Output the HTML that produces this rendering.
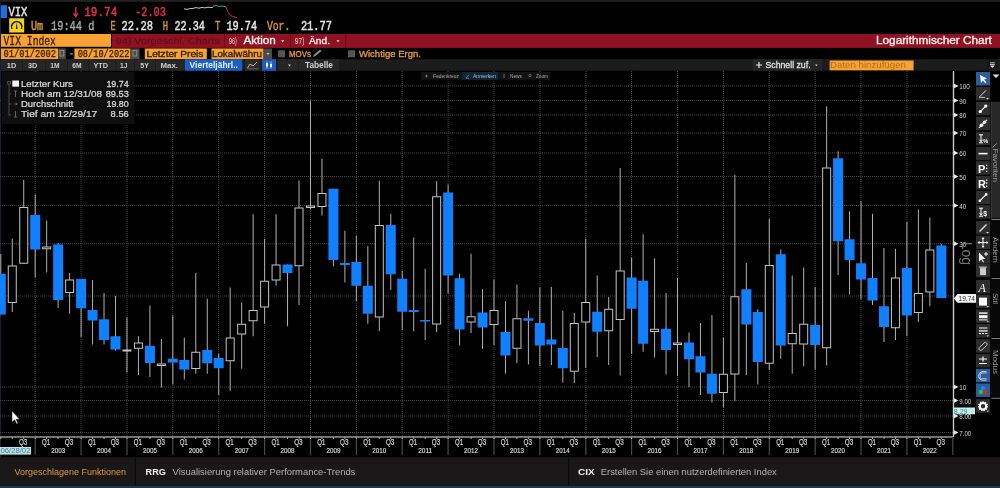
<!DOCTYPE html>
<html><head><meta charset="utf-8"><style>
*{margin:0;padding:0;box-sizing:border-box}
html,body{width:1000px;height:488px;overflow:hidden;background:#000}
body{position:relative;font-family:"Liberation Sans",sans-serif}
.a{position:absolute}
svg{position:absolute;left:0;top:0;will-change:transform}
.g{stroke:#484848;stroke-width:1;stroke-dasharray:1 1}
.w{stroke:#b0b0b0;stroke-width:1}
.b{fill:#1080ff}
.h{fill:#000;stroke:#c4c4c4;stroke-width:1}
.ax{stroke:#c8c8c8;stroke-width:1.4}
.ax2{stroke:#9a9a9a;stroke-width:1.6}
.ys{stroke:#4a4a4a;stroke-width:1.2}
.qt{stroke:#aaa;stroke-width:1}
</style></head><body>
<svg width="1000" height="488" viewBox="0 0 1000 488">
<rect x="0" y="0" width="1000" height="1.8" fill="#222"/><rect x="0" y="5.2" width="7" height="12.8" fill="#1f6fd6"/><rect x="0" y="1.8" width="0.9" height="456" fill="#1a2535"/><rect x="1" y="34" width="110" height="12.8" fill="#f6a235"/><rect x="112" y="34" width="888" height="13.9" fill="#8e1221"/><rect x="224" y="34" width="1" height="13.5" fill="#6a0c18"/><rect x="290" y="34" width="1" height="13.5" fill="#6a0c18"/><rect x="345" y="34" width="1" height="13.5" fill="#6a0c18"/><rect x="1" y="48.5" width="57" height="10.5" fill="#f6a235"/><rect x="74.4" y="48.5" width="56.099999999999994" height="10.5" fill="#f6a235"/><rect x="144.8" y="48.5" width="62.0" height="10.5" fill="#f6a235"/><rect x="211.5" y="48.5" width="52.10000000000002" height="10.5" fill="#f6a235"/><rect x="58.1" y="48.5" width="7.699999999999996" height="10.5" fill="#4a4a4a"/><rect x="131" y="48.5" width="8.599999999999994" height="10.5" fill="#4a4a4a"/><rect x="263.6" y="48.5" width="8.399999999999977" height="10.5" fill="#4a4a4a"/><rect x="60" y="50.5" width="3.8" height="5.5" fill="none" stroke="#999" stroke-width="0.8"/><rect x="133" y="50.5" width="3.8" height="5.5" fill="none" stroke="#999" stroke-width="0.8"/><path d="M266.5 53 L269.5 53 L268 55Z" fill="#ccc"/><rect x="278" y="50.3" width="7" height="7" fill="#555"/><rect x="348" y="50.3" width="7" height="7" fill="#555"/><path d="M313 57 L314 54.5 L320 49.5 L321.5 51 L315.5 56 Z" fill="#888"/><rect x="1" y="59.2" width="999" height="11.5" fill="#1c1c1c"/><rect x="1" y="59.2" width="21" height="11.5" fill="#262626"/><rect x="23" y="59.2" width="22" height="11.5" fill="#262626"/><rect x="46" y="59.2" width="21" height="11.5" fill="#262626"/><rect x="68" y="59.2" width="20.400000000000006" height="11.5" fill="#262626"/><rect x="89.4" y="59.2" width="26.19999999999999" height="11.5" fill="#262626"/><rect x="116.6" y="59.2" width="17.400000000000006" height="11.5" fill="#262626"/><rect x="135" y="59.2" width="20" height="11.5" fill="#262626"/><rect x="156" y="59.2" width="28" height="11.5" fill="#262626"/><rect x="184.8" y="59.2" width="57.5" height="11.5" fill="#1b5fc4"/><rect x="245" y="59.2" width="15" height="11.5" fill="#2a2a2a"/><path d="M247.5 68 L250 64 L253 66 L257 62" fill="none" stroke="#ccc" stroke-width="0.9"/><path d="M247 68.8 H258" stroke="#888" stroke-width="0.6"/><rect x="262" y="59.2" width="14" height="11.5" fill="#1b5fc4"/><path d="M267 61.5 V68.5 M271 61.5 V68.5" stroke="#fff" stroke-width="0.7"/><rect x="266" y="63" width="2" height="3.5" fill="#fff"/><rect x="270" y="64" width="2" height="3" fill="#fff"/><rect x="278" y="59.2" width="20" height="11.5" fill="#262626"/><rect x="299" y="59.2" width="40" height="11.5" fill="#262626"/><rect x="753" y="59.2" width="69" height="11.5" fill="#262626"/><rect x="829.6" y="60.5" width="84" height="9.8" fill="#f6a235"/><rect x="0" y="457.2" width="1000" height="28.6" fill="#191717"/><rect x="0" y="485.8" width="1000" height="2.2" fill="#1b3752"/><rect x="134.8" y="457.2" width="1.2" height="28.6" fill="#0a0a0a"/><rect x="568" y="457.2" width="1.2" height="28.6" fill="#0a0a0a"/>
<text transform="translate(8.50 15.90) scale(0.7663 1)" font-family="Liberation Mono" font-weight="normal" font-size="13.63" fill="#e6e6e6" stroke="#e6e6e6" stroke-width="0.45">VIX</text>
<text transform="translate(84.20 15.90) scale(0.8095 1)" font-family="Liberation Mono" font-weight="normal" font-size="13.63" fill="#e5334b" stroke="#e5334b" stroke-width="0.45">19.74</text>
<text transform="translate(135.20 15.90) scale(0.7484 1)" font-family="Liberation Mono" font-weight="normal" font-size="13.63" fill="#e5334b" stroke="#e5334b" stroke-width="0.45">-2.03</text>
<path d="M75.8 7 V15.5 M73.6 13.3 L75.8 16.8 L78 13.3" fill="none" stroke="#e5334b" stroke-width="1.3"/>
<text transform="translate(31.00 29.90) scale(0.7810 1)" font-family="Liberation Mono" font-weight="normal" font-size="13.02" fill="#dc9440" stroke="#dc9440" stroke-width="0.45">Um</text>
<text transform="translate(51.00 29.90) scale(0.7937 1)" font-family="Liberation Mono" font-weight="normal" font-size="13.02" fill="#a6a6a6" stroke="#a6a6a6" stroke-width="0.45">19:44 d</text>
<text transform="translate(110.50 29.90) scale(0.6530 1)" font-family="Liberation Mono" font-weight="normal" font-size="13.02" fill="#dc9440" stroke="#dc9440" stroke-width="0.45">E</text>
<text transform="translate(121.60 29.90) scale(0.8041 1)" font-family="Liberation Mono" font-weight="normal" font-size="13.02" fill="#e6e6e6" stroke="#e6e6e6" stroke-width="0.45">22.28</text>
<text transform="translate(162.70 29.90) scale(0.6786 1)" font-family="Liberation Mono" font-weight="normal" font-size="13.02" fill="#dc9440" stroke="#dc9440" stroke-width="0.45">H</text>
<text transform="translate(174.40 29.90) scale(0.7836 1)" font-family="Liberation Mono" font-weight="normal" font-size="13.02" fill="#e6e6e6" stroke="#e6e6e6" stroke-width="0.45">22.34</text>
<text transform="translate(214.90 29.90) scale(0.6914 1)" font-family="Liberation Mono" font-weight="normal" font-size="13.02" fill="#dc9440" stroke="#dc9440" stroke-width="0.45">T</text>
<text transform="translate(226.50 29.90) scale(0.7836 1)" font-family="Liberation Mono" font-weight="normal" font-size="13.02" fill="#e6e6e6" stroke="#e6e6e6" stroke-width="0.45">19.74</text>
<text transform="translate(266.90 29.90) scale(0.7490 1)" font-family="Liberation Mono" font-weight="normal" font-size="13.02" fill="#dc9440" stroke="#dc9440" stroke-width="0.45">Vor.</text>
<text transform="translate(300.90 29.90) scale(0.7964 1)" font-family="Liberation Mono" font-weight="normal" font-size="13.02" fill="#e6e6e6" stroke="#e6e6e6" stroke-width="0.45">21.77</text>
<polyline points="184,8.8 187,9.4 190,8.6 193,8.4 196,7.6 199,8.2 202,7.4 205,7.9 208,7.2 211,7.6 213,7.2" fill="none" stroke="#ddd" stroke-width="0.9"/>
<polyline points="213,6.2 216,5.6 219,6.4 222,6.0 226,6.8" fill="none" stroke="#35c040" stroke-width="1"/>
<polyline points="226,6.8 227,10 228.5,13 231,15.8 234,16.8 237,17.6" fill="none" stroke="#d02a2a" stroke-width="1"/>
<rect x="9.2" y="18.3" width="15" height="14.2" fill="#f2d41a"/>
<path d="M12 29 A5.2 5.2 0 1 1 21.4 29" fill="none" stroke="#1a1a00" stroke-width="1.5"/>
<path d="M16.7 22.5 L17.6 29 L15.8 29 Z" fill="#1a1a00"/>
<text transform="translate(3.50 45.00) scale(0.7934 1)" font-family="Liberation Mono" font-weight="normal" font-size="12.25" fill="#3a2000" stroke="#3a2000" stroke-width="0.3">VIX Index</text>
<text transform="translate(115.60 43.60) scale(1.1995 1)" font-family="Liberation Sans" font-weight="normal" font-size="9.05" fill="#5c0b17" >94) Vorgeschl. Charts</text>
<text transform="translate(229.10 43.60) scale(0.5777 1)" font-family="Liberation Sans" font-weight="normal" font-size="9.34" fill="#e8c8c8" >96)</text>
<text transform="translate(243.40 43.70) scale(1.0681 1)" font-family="Liberation Sans" font-weight="normal" font-size="10.95" fill="#f4ecec" stroke="#f4ecec" stroke-width="0.35">Aktion</text>
<path d="M281 40.2 L284.4 40.2 L282.7 42.3Z" fill="#f0e0e0"/>
<text transform="translate(294.80 43.60) scale(0.7185 1)" font-family="Liberation Sans" font-weight="normal" font-size="9.34" fill="#e8c8c8" >97)</text>
<text transform="translate(309.00 43.70) scale(1.0329 1)" font-family="Liberation Sans" font-weight="normal" font-size="9.88" fill="#f4ecec" stroke="#f4ecec" stroke-width="0.35">Änd.</text>
<path d="M336.4 40.2 L339.6 40.2 L338 42.3Z" fill="#f0e0e0"/>
<text transform="translate(876.00 44.00) scale(1.1540 1)" font-family="Liberation Sans" font-weight="normal" font-size="10.22" fill="#f4ecec" stroke="#f4ecec" stroke-width="0.35">Logarithmischer Chart</text>
<text transform="translate(3.50 57.20) scale(0.8161 1)" font-family="Liberation Mono" font-weight="normal" font-size="10.72" fill="#3a2000" stroke="#3a2000" stroke-width="0.3">01/01/2002</text>
<text transform="translate(77.70 57.20) scale(0.8052 1)" font-family="Liberation Mono" font-weight="normal" font-size="10.72" fill="#3a2000" stroke="#3a2000" stroke-width="0.3">08/10/2022</text>
<rect x="70" y="53.4" width="2.8" height="1" fill="#bbb"/>
<text transform="translate(146.50 57.00) scale(1.1594 1)" font-family="Liberation Sans" font-weight="normal" font-size="8.76" fill="#3a2000" stroke="#3a2000" stroke-width="0.35">Letzter Preis</text>
<text transform="translate(212.00 57.00) scale(1.1162 1)" font-family="Liberation Sans" font-weight="normal" font-size="8.76" fill="#3a2000" stroke="#3a2000" stroke-width="0.35">Lokalwähru</text>
<text transform="translate(289.00 57.00) scale(0.9041 1)" font-family="Liberation Sans" font-weight="normal" font-size="8.76" fill="#e0963c" stroke="#e0963c" stroke-width="0.35">MOVs</text>
<text transform="translate(359.00 57.00) scale(1.0886 1)" font-family="Liberation Sans" font-weight="normal" font-size="8.76" fill="#e0963c" stroke="#e0963c" stroke-width="0.35">Wichtige Ergn.</text>
<text transform="translate(6.80 68.00) scale(0.9161 1)" font-family="Liberation Sans" font-weight="bold" font-size="8.03" fill="#d0d0d0" >1D</text>
<text transform="translate(28.00 68.00) scale(0.9161 1)" font-family="Liberation Sans" font-weight="bold" font-size="8.03" fill="#d0d0d0" >3D</text>
<text transform="translate(50.20 68.00) scale(0.8339 1)" font-family="Liberation Sans" font-weight="bold" font-size="8.03" fill="#d0d0d0" >1M</text>
<text transform="translate(72.30 68.00) scale(0.8339 1)" font-family="Liberation Sans" font-weight="bold" font-size="8.03" fill="#d0d0d0" >6M</text>
<text transform="translate(93.50 68.00) scale(0.9030 1)" font-family="Liberation Sans" font-weight="bold" font-size="8.03" fill="#d0d0d0" >YTD</text>
<text transform="translate(120.00 68.00) scale(0.8400 1)" font-family="Liberation Sans" font-weight="bold" font-size="8.03" fill="#d0d0d0" >1J</text>
<text transform="translate(140.30 68.00) scale(0.8656 1)" font-family="Liberation Sans" font-weight="bold" font-size="8.03" fill="#d0d0d0" >5Y</text>
<text transform="translate(160.50 68.00) scale(0.9805 1)" font-family="Liberation Sans" font-weight="bold" font-size="8.03" fill="#d0d0d0" >Max.</text>
<text transform="translate(189.60 68.00) scale(1.0192 1)" font-family="Liberation Sans" font-weight="bold" font-size="8.32" fill="#e8f0ff" >Vierteljährl..</text>
<text transform="translate(305.00 68.00) scale(0.9979 1)" font-family="Liberation Sans" font-weight="bold" font-size="8.32" fill="#d0d0d0" >Tabelle</text>
<text transform="translate(765.50 68.30) scale(0.9487 1)" font-family="Liberation Sans" font-weight="normal" font-size="9.20" fill="#e0e0e0" stroke="#e0e0e0" stroke-width="0.3">Schnell zuf.</text>
<path d="M756 65 H762 M759 62 V68" stroke="#e8e8e8" stroke-width="1.2"/>
<path d="M815 64.5 L817.8 64.5 L816.4 66.3Z" fill="#ccc"/>
<path d="M288 64.5 L291 64.5 L289.5 66.5Z" fill="#ccc"/>
<text transform="translate(830.00 68.30) scale(1.0542 1)" font-family="Liberation Sans" font-weight="normal" font-size="9.20" fill="#b86a10" >Daten hinzufügen</text>
<line x1="0" y1="86" x2="953" y2="86" class="g"/>
<line x1="0" y1="100.5" x2="953" y2="100.5" class="g"/>
<line x1="0" y1="115" x2="953" y2="115" class="g"/>
<line x1="0" y1="133" x2="953" y2="133" class="g"/>
<line x1="0" y1="153" x2="953" y2="153" class="g"/>
<line x1="0" y1="176.5" x2="953" y2="176.5" class="g"/>
<line x1="0" y1="205.5" x2="953" y2="205.5" class="g"/>
<line x1="0" y1="243.75" x2="953" y2="243.75" class="g"/>
<line x1="0" y1="296" x2="953" y2="296" class="g"/>
<line x1="0" y1="387" x2="953" y2="387" class="g"/>
<line x1="0" y1="400.5" x2="953" y2="400.5" class="g"/>
<line x1="0" y1="416" x2="953" y2="416" class="g"/>
<line x1="0" y1="432.5" x2="953" y2="432.5" class="g"/>
<line x1="35.2" y1="71" x2="35.2" y2="436" class="g"/>
<line x1="81.1" y1="71" x2="81.1" y2="436" class="g"/>
<line x1="127.0" y1="71" x2="127.0" y2="436" class="g"/>
<line x1="172.8" y1="71" x2="172.8" y2="436" class="g"/>
<line x1="218.7" y1="71" x2="218.7" y2="436" class="g"/>
<line x1="264.6" y1="71" x2="264.6" y2="436" class="g"/>
<line x1="310.5" y1="71" x2="310.5" y2="436" class="g"/>
<line x1="356.4" y1="71" x2="356.4" y2="436" class="g"/>
<line x1="402.2" y1="71" x2="402.2" y2="436" class="g"/>
<line x1="448.1" y1="71" x2="448.1" y2="436" class="g"/>
<line x1="494.0" y1="71" x2="494.0" y2="436" class="g"/>
<line x1="539.9" y1="71" x2="539.9" y2="436" class="g"/>
<line x1="585.8" y1="71" x2="585.8" y2="436" class="g"/>
<line x1="631.6" y1="71" x2="631.6" y2="436" class="g"/>
<line x1="677.5" y1="71" x2="677.5" y2="436" class="g"/>
<line x1="723.4" y1="71" x2="723.4" y2="436" class="g"/>
<line x1="769.3" y1="71" x2="769.3" y2="436" class="g"/>
<line x1="815.2" y1="71" x2="815.2" y2="436" class="g"/>
<line x1="861.0" y1="71" x2="861.0" y2="436" class="g"/>
<line x1="906.9" y1="71" x2="906.9" y2="436" class="g"/>
<line x1="0.79" y1="254.0" x2="0.79" y2="314.5" class="w"/>
<rect x="-4.21" y="273.75" width="10" height="40.75" class="b"/>
<line x1="12.26" y1="238.75" x2="12.26" y2="312.0" class="w"/>
<rect x="8.26" y="266.0" width="8" height="36.50" class="h"/>
<line x1="23.73" y1="180.0" x2="23.73" y2="263.75" class="w"/>
<rect x="19.73" y="207.5" width="8" height="55.75" class="h"/>
<line x1="35.20" y1="194.5" x2="35.20" y2="277.5" class="w"/>
<rect x="30.20" y="215.0" width="10" height="34.50" class="b"/>
<line x1="46.67" y1="220.5" x2="46.67" y2="272.5" class="w"/>
<rect x="42.67" y="247.0" width="8" height="1.75" class="h"/>
<line x1="58.14" y1="243.0" x2="58.14" y2="308.0" class="w"/>
<rect x="53.14" y="244.5" width="10" height="55.50" class="b"/>
<line x1="69.61" y1="273.0" x2="69.61" y2="313.75" class="w"/>
<rect x="65.61" y="280.0" width="8" height="12.50" class="h"/>
<line x1="81.08" y1="279.0" x2="81.08" y2="337.0" class="w"/>
<rect x="76.08" y="279.0" width="10" height="29.25" class="b"/>
<line x1="92.55" y1="280.0" x2="92.55" y2="344.5" class="w"/>
<rect x="87.55" y="310.0" width="10" height="10.50" class="b"/>
<line x1="104.02" y1="293.0" x2="104.02" y2="344.5" class="w"/>
<rect x="99.02" y="319.25" width="10" height="20.75" class="b"/>
<line x1="115.49" y1="296.0" x2="115.49" y2="350.5" class="w"/>
<rect x="110.49" y="336.25" width="10" height="13.25" class="b"/>
<line x1="126.96" y1="317.5" x2="126.96" y2="372.5" class="w"/>
<rect x="122.96" y="350.0" width="8" height="1.00" class="h"/>
<line x1="138.43" y1="336.25" x2="138.43" y2="375.0" class="w"/>
<rect x="134.43" y="343.0" width="8" height="5.25" class="h"/>
<line x1="149.90" y1="305.5" x2="149.90" y2="377.0" class="w"/>
<rect x="144.90" y="345.75" width="10" height="17.25" class="b"/>
<line x1="161.37" y1="339.0" x2="161.37" y2="387.5" class="w"/>
<rect x="157.37" y="364.0" width="8" height="1.50" class="h"/>
<line x1="172.84" y1="315.5" x2="172.84" y2="384.5" class="w"/>
<rect x="167.84" y="358.75" width="10" height="3.75" class="b"/>
<line x1="184.31" y1="337.5" x2="184.31" y2="379.5" class="w"/>
<rect x="179.31" y="360.0" width="10" height="9.50" class="b"/>
<line x1="195.78" y1="273.0" x2="195.78" y2="373.75" class="w"/>
<rect x="191.78" y="352.25" width="8" height="16.25" class="h"/>
<line x1="207.25" y1="298.75" x2="207.25" y2="373.75" class="w"/>
<rect x="202.25" y="350.0" width="10" height="13.25" class="b"/>
<line x1="218.72" y1="353.75" x2="218.72" y2="395.0" class="w"/>
<rect x="213.72" y="358.0" width="10" height="10.25" class="b"/>
<line x1="230.19" y1="287.5" x2="230.19" y2="390.75" class="w"/>
<rect x="226.19" y="338.0" width="8" height="22.75" class="h"/>
<line x1="241.66" y1="302.5" x2="241.66" y2="368.75" class="w"/>
<rect x="237.66" y="324.25" width="8" height="9.75" class="h"/>
<line x1="253.13" y1="214.25" x2="253.13" y2="336.25" class="w"/>
<rect x="249.13" y="310.5" width="8" height="10.25" class="h"/>
<line x1="264.60" y1="238.75" x2="264.60" y2="323.75" class="w"/>
<rect x="260.60" y="281.25" width="8" height="25.75" class="h"/>
<line x1="276.07" y1="214.25" x2="276.07" y2="285.5" class="w"/>
<rect x="272.07" y="265.0" width="8" height="15.00" class="h"/>
<line x1="287.54" y1="264.5" x2="287.54" y2="326.25" class="w"/>
<rect x="282.54" y="264.5" width="10" height="8.50" class="b"/>
<line x1="299.01" y1="180.5" x2="299.01" y2="305.0" class="w"/>
<rect x="295.01" y="208.0" width="8" height="57.75" class="h"/>
<line x1="310.48" y1="100.5" x2="310.48" y2="209.0" class="w"/>
<rect x="306.48" y="206.0" width="8" height="1.50" class="h"/>
<line x1="321.95" y1="158.75" x2="321.95" y2="215.5" class="w"/>
<rect x="317.95" y="193.5" width="8" height="13.00" class="h"/>
<line x1="333.42" y1="188.75" x2="333.42" y2="266.25" class="w"/>
<rect x="328.42" y="188.75" width="10" height="71.25" class="b"/>
<line x1="344.89" y1="230.75" x2="344.89" y2="282.5" class="w"/>
<rect x="339.89" y="263.0" width="10" height="2.00" class="b"/>
<line x1="356.36" y1="235.75" x2="356.36" y2="301.25" class="w"/>
<rect x="351.36" y="262.0" width="10" height="23.75" class="b"/>
<line x1="367.83" y1="246.25" x2="367.83" y2="323.75" class="w"/>
<rect x="362.83" y="285.75" width="10" height="28.00" class="b"/>
<line x1="379.30" y1="180.75" x2="379.30" y2="331.25" class="w"/>
<rect x="375.30" y="225.5" width="8" height="91.50" class="h"/>
<line x1="390.77" y1="213.75" x2="390.77" y2="290.0" class="w"/>
<rect x="385.77" y="225.0" width="10" height="49.25" class="b"/>
<line x1="402.24" y1="270.75" x2="402.24" y2="330.0" class="w"/>
<rect x="397.24" y="278.75" width="10" height="33.00" class="b"/>
<line x1="413.71" y1="237.5" x2="413.71" y2="331.25" class="w"/>
<rect x="408.71" y="310.0" width="10" height="2.00" class="b"/>
<line x1="425.18" y1="268.75" x2="425.18" y2="340.0" class="w"/>
<rect x="420.18" y="320.0" width="10" height="1.50" class="b"/>
<line x1="436.65" y1="181.25" x2="436.65" y2="332.0" class="w"/>
<rect x="432.65" y="196.75" width="8" height="127.25" class="h"/>
<line x1="448.12" y1="184.5" x2="448.12" y2="293.75" class="w"/>
<rect x="443.12" y="192.5" width="10" height="83.00" class="b"/>
<line x1="459.59" y1="273.75" x2="459.59" y2="345.5" class="w"/>
<rect x="454.59" y="278.25" width="10" height="51.25" class="b"/>
<line x1="471.06" y1="253.75" x2="471.06" y2="333.0" class="w"/>
<rect x="467.06" y="316.75" width="8" height="5.25" class="h"/>
<line x1="482.53" y1="289.0" x2="482.53" y2="348.75" class="w"/>
<rect x="477.53" y="312.5" width="10" height="15.00" class="b"/>
<line x1="494.00" y1="279.5" x2="494.00" y2="345.0" class="w"/>
<rect x="490.00" y="310.5" width="8" height="14.00" class="h"/>
<line x1="505.47" y1="301.25" x2="505.47" y2="373.75" class="w"/>
<rect x="500.47" y="332.0" width="10" height="23.50" class="b"/>
<line x1="516.94" y1="284.5" x2="516.94" y2="363.0" class="w"/>
<rect x="512.94" y="318.75" width="8" height="29.50" class="h"/>
<line x1="528.41" y1="310.75" x2="528.41" y2="364.5" class="w"/>
<rect x="523.41" y="318.25" width="10" height="2.50" class="b"/>
<line x1="539.88" y1="287.5" x2="539.88" y2="366.25" class="w"/>
<rect x="534.88" y="323.0" width="10" height="22.50" class="b"/>
<line x1="551.35" y1="287.0" x2="551.35" y2="365.0" class="w"/>
<rect x="546.35" y="339.5" width="10" height="5.00" class="b"/>
<line x1="562.82" y1="310.75" x2="562.82" y2="382.5" class="w"/>
<rect x="557.82" y="348.0" width="10" height="20.25" class="b"/>
<line x1="574.29" y1="313.0" x2="574.29" y2="383.0" class="w"/>
<rect x="570.29" y="323.5" width="8" height="47.75" class="h"/>
<line x1="585.76" y1="238.75" x2="585.76" y2="368.0" class="w"/>
<rect x="581.76" y="302.5" width="8" height="19.50" class="h"/>
<line x1="597.23" y1="275.5" x2="597.23" y2="357.0" class="w"/>
<rect x="592.23" y="311.75" width="10" height="20.00" class="b"/>
<line x1="608.70" y1="297.0" x2="608.70" y2="365.0" class="w"/>
<rect x="604.70" y="309.25" width="8" height="21.50" class="h"/>
<line x1="620.17" y1="168.0" x2="620.17" y2="375.5" class="w"/>
<rect x="616.17" y="271.0" width="8" height="48.50" class="h"/>
<line x1="631.64" y1="257.5" x2="631.64" y2="353.75" class="w"/>
<rect x="626.64" y="277.5" width="10" height="31.25" class="b"/>
<line x1="643.11" y1="234.25" x2="643.11" y2="351.75" class="w"/>
<rect x="638.11" y="280.75" width="10" height="63.00" class="b"/>
<line x1="654.58" y1="258.25" x2="654.58" y2="357.5" class="w"/>
<rect x="650.58" y="329.25" width="8" height="2.25" class="h"/>
<line x1="666.05" y1="293.0" x2="666.05" y2="374.5" class="w"/>
<rect x="661.05" y="328.75" width="10" height="21.25" class="b"/>
<line x1="677.52" y1="278.0" x2="677.52" y2="376.0" class="w"/>
<rect x="673.52" y="343.0" width="8" height="1.50" class="h"/>
<line x1="688.99" y1="332.5" x2="688.99" y2="387.0" class="w"/>
<rect x="683.99" y="342.5" width="10" height="16.75" class="b"/>
<line x1="700.46" y1="323.0" x2="700.46" y2="395.0" class="w"/>
<rect x="695.46" y="356.25" width="10" height="16.25" class="b"/>
<line x1="711.93" y1="315.0" x2="711.93" y2="402.5" class="w"/>
<rect x="706.93" y="373.75" width="10" height="20.00" class="b"/>
<line x1="723.40" y1="337.5" x2="723.40" y2="407.5" class="w"/>
<rect x="719.40" y="374.25" width="8" height="18.25" class="h"/>
<line x1="734.87" y1="175.0" x2="734.87" y2="401.25" class="w"/>
<rect x="730.87" y="296.75" width="8" height="77.25" class="h"/>
<line x1="746.34" y1="263.0" x2="746.34" y2="375.0" class="w"/>
<rect x="741.34" y="289.25" width="10" height="35.25" class="b"/>
<line x1="757.81" y1="309.25" x2="757.81" y2="384.5" class="w"/>
<rect x="752.81" y="312.0" width="10" height="50.00" class="b"/>
<line x1="769.28" y1="218.75" x2="769.28" y2="370.0" class="w"/>
<rect x="765.28" y="265.5" width="8" height="97.75" class="h"/>
<line x1="780.75" y1="249.5" x2="780.75" y2="358.75" class="w"/>
<rect x="775.75" y="254.25" width="10" height="91.25" class="b"/>
<line x1="792.22" y1="275.5" x2="792.22" y2="373.75" class="w"/>
<rect x="788.22" y="333.5" width="8" height="10.25" class="h"/>
<line x1="803.69" y1="267.5" x2="803.69" y2="366.25" class="w"/>
<rect x="799.69" y="324.25" width="8" height="19.75" class="h"/>
<line x1="815.16" y1="287.0" x2="815.16" y2="369.5" class="w"/>
<rect x="810.16" y="325.0" width="10" height="20.00" class="b"/>
<line x1="826.63" y1="106.25" x2="826.63" y2="365.5" class="w"/>
<rect x="822.63" y="168.0" width="8" height="179.75" class="h"/>
<line x1="838.10" y1="151.25" x2="838.10" y2="275.0" class="w"/>
<rect x="833.10" y="158.25" width="10" height="83.00" class="b"/>
<line x1="849.57" y1="211.25" x2="849.57" y2="294.5" class="w"/>
<rect x="844.57" y="239.25" width="10" height="20.75" class="b"/>
<line x1="861.04" y1="201.25" x2="861.04" y2="299.25" class="w"/>
<rect x="856.04" y="263.25" width="10" height="16.25" class="b"/>
<line x1="872.51" y1="213.75" x2="872.51" y2="305.0" class="w"/>
<rect x="867.51" y="278.0" width="10" height="22.50" class="b"/>
<line x1="883.98" y1="248.0" x2="883.98" y2="342.0" class="w"/>
<rect x="878.98" y="306.25" width="10" height="20.75" class="b"/>
<line x1="895.45" y1="248.75" x2="895.45" y2="340.0" class="w"/>
<rect x="891.45" y="278.0" width="8" height="49.75" class="h"/>
<line x1="906.92" y1="222.0" x2="906.92" y2="336.25" class="w"/>
<rect x="901.92" y="268.0" width="10" height="47.50" class="b"/>
<line x1="918.39" y1="209.5" x2="918.39" y2="322.0" class="w"/>
<rect x="914.39" y="293.5" width="8" height="19.00" class="h"/>
<line x1="929.86" y1="217.5" x2="929.86" y2="306.25" class="w"/>
<rect x="925.86" y="250.0" width="8" height="42.00" class="h"/>
<line x1="941.33" y1="243.75" x2="941.33" y2="298.0" class="w"/>
<rect x="936.33" y="245.5" width="10" height="52.50" class="b"/>
<line x1="953.5" y1="71" x2="953.5" y2="437" class="ax"/>
<line x1="0" y1="437" x2="953.5" y2="437" class="ax2"/>
<line x1="35.2" y1="437" x2="35.2" y2="455" class="ys"/>
<line x1="81.1" y1="437" x2="81.1" y2="455" class="ys"/>
<line x1="127.0" y1="437" x2="127.0" y2="455" class="ys"/>
<line x1="172.8" y1="437" x2="172.8" y2="455" class="ys"/>
<line x1="218.7" y1="437" x2="218.7" y2="455" class="ys"/>
<line x1="264.6" y1="437" x2="264.6" y2="455" class="ys"/>
<line x1="310.5" y1="437" x2="310.5" y2="455" class="ys"/>
<line x1="356.4" y1="437" x2="356.4" y2="455" class="ys"/>
<line x1="402.2" y1="437" x2="402.2" y2="455" class="ys"/>
<line x1="448.1" y1="437" x2="448.1" y2="455" class="ys"/>
<line x1="494.0" y1="437" x2="494.0" y2="455" class="ys"/>
<line x1="539.9" y1="437" x2="539.9" y2="455" class="ys"/>
<line x1="585.8" y1="437" x2="585.8" y2="455" class="ys"/>
<line x1="631.6" y1="437" x2="631.6" y2="455" class="ys"/>
<line x1="677.5" y1="437" x2="677.5" y2="455" class="ys"/>
<line x1="723.4" y1="437" x2="723.4" y2="455" class="ys"/>
<line x1="769.3" y1="437" x2="769.3" y2="455" class="ys"/>
<line x1="815.2" y1="437" x2="815.2" y2="455" class="ys"/>
<line x1="861.0" y1="437" x2="861.0" y2="455" class="ys"/>
<line x1="906.9" y1="437" x2="906.9" y2="455" class="ys"/>
<line x1="952.8" y1="437" x2="952.8" y2="455" class="ys"/>
<line x1="0.8" y1="437" x2="0.8" y2="439" class="qt"/>
<line x1="12.3" y1="437" x2="12.3" y2="439" class="qt"/>
<line x1="23.7" y1="437" x2="23.7" y2="439" class="qt"/>
<line x1="35.2" y1="437" x2="35.2" y2="439" class="qt"/>
<line x1="46.7" y1="437" x2="46.7" y2="439" class="qt"/>
<line x1="58.1" y1="437" x2="58.1" y2="439" class="qt"/>
<line x1="69.6" y1="437" x2="69.6" y2="439" class="qt"/>
<line x1="81.1" y1="437" x2="81.1" y2="439" class="qt"/>
<line x1="92.6" y1="437" x2="92.6" y2="439" class="qt"/>
<line x1="104.0" y1="437" x2="104.0" y2="439" class="qt"/>
<line x1="115.5" y1="437" x2="115.5" y2="439" class="qt"/>
<line x1="127.0" y1="437" x2="127.0" y2="439" class="qt"/>
<line x1="138.4" y1="437" x2="138.4" y2="439" class="qt"/>
<line x1="149.9" y1="437" x2="149.9" y2="439" class="qt"/>
<line x1="161.4" y1="437" x2="161.4" y2="439" class="qt"/>
<line x1="172.8" y1="437" x2="172.8" y2="439" class="qt"/>
<line x1="184.3" y1="437" x2="184.3" y2="439" class="qt"/>
<line x1="195.8" y1="437" x2="195.8" y2="439" class="qt"/>
<line x1="207.2" y1="437" x2="207.2" y2="439" class="qt"/>
<line x1="218.7" y1="437" x2="218.7" y2="439" class="qt"/>
<line x1="230.2" y1="437" x2="230.2" y2="439" class="qt"/>
<line x1="241.7" y1="437" x2="241.7" y2="439" class="qt"/>
<line x1="253.1" y1="437" x2="253.1" y2="439" class="qt"/>
<line x1="264.6" y1="437" x2="264.6" y2="439" class="qt"/>
<line x1="276.1" y1="437" x2="276.1" y2="439" class="qt"/>
<line x1="287.5" y1="437" x2="287.5" y2="439" class="qt"/>
<line x1="299.0" y1="437" x2="299.0" y2="439" class="qt"/>
<line x1="310.5" y1="437" x2="310.5" y2="439" class="qt"/>
<line x1="321.9" y1="437" x2="321.9" y2="439" class="qt"/>
<line x1="333.4" y1="437" x2="333.4" y2="439" class="qt"/>
<line x1="344.9" y1="437" x2="344.9" y2="439" class="qt"/>
<line x1="356.4" y1="437" x2="356.4" y2="439" class="qt"/>
<line x1="367.8" y1="437" x2="367.8" y2="439" class="qt"/>
<line x1="379.3" y1="437" x2="379.3" y2="439" class="qt"/>
<line x1="390.8" y1="437" x2="390.8" y2="439" class="qt"/>
<line x1="402.2" y1="437" x2="402.2" y2="439" class="qt"/>
<line x1="413.7" y1="437" x2="413.7" y2="439" class="qt"/>
<line x1="425.2" y1="437" x2="425.2" y2="439" class="qt"/>
<line x1="436.7" y1="437" x2="436.7" y2="439" class="qt"/>
<line x1="448.1" y1="437" x2="448.1" y2="439" class="qt"/>
<line x1="459.6" y1="437" x2="459.6" y2="439" class="qt"/>
<line x1="471.1" y1="437" x2="471.1" y2="439" class="qt"/>
<line x1="482.5" y1="437" x2="482.5" y2="439" class="qt"/>
<line x1="494.0" y1="437" x2="494.0" y2="439" class="qt"/>
<line x1="505.5" y1="437" x2="505.5" y2="439" class="qt"/>
<line x1="516.9" y1="437" x2="516.9" y2="439" class="qt"/>
<line x1="528.4" y1="437" x2="528.4" y2="439" class="qt"/>
<line x1="539.9" y1="437" x2="539.9" y2="439" class="qt"/>
<line x1="551.4" y1="437" x2="551.4" y2="439" class="qt"/>
<line x1="562.8" y1="437" x2="562.8" y2="439" class="qt"/>
<line x1="574.3" y1="437" x2="574.3" y2="439" class="qt"/>
<line x1="585.8" y1="437" x2="585.8" y2="439" class="qt"/>
<line x1="597.2" y1="437" x2="597.2" y2="439" class="qt"/>
<line x1="608.7" y1="437" x2="608.7" y2="439" class="qt"/>
<line x1="620.2" y1="437" x2="620.2" y2="439" class="qt"/>
<line x1="631.6" y1="437" x2="631.6" y2="439" class="qt"/>
<line x1="643.1" y1="437" x2="643.1" y2="439" class="qt"/>
<line x1="654.6" y1="437" x2="654.6" y2="439" class="qt"/>
<line x1="666.1" y1="437" x2="666.1" y2="439" class="qt"/>
<line x1="677.5" y1="437" x2="677.5" y2="439" class="qt"/>
<line x1="689.0" y1="437" x2="689.0" y2="439" class="qt"/>
<line x1="700.5" y1="437" x2="700.5" y2="439" class="qt"/>
<line x1="711.9" y1="437" x2="711.9" y2="439" class="qt"/>
<line x1="723.4" y1="437" x2="723.4" y2="439" class="qt"/>
<line x1="734.9" y1="437" x2="734.9" y2="439" class="qt"/>
<line x1="746.3" y1="437" x2="746.3" y2="439" class="qt"/>
<line x1="757.8" y1="437" x2="757.8" y2="439" class="qt"/>
<line x1="769.3" y1="437" x2="769.3" y2="439" class="qt"/>
<line x1="780.8" y1="437" x2="780.8" y2="439" class="qt"/>
<line x1="792.2" y1="437" x2="792.2" y2="439" class="qt"/>
<line x1="803.7" y1="437" x2="803.7" y2="439" class="qt"/>
<line x1="815.2" y1="437" x2="815.2" y2="439" class="qt"/>
<line x1="826.6" y1="437" x2="826.6" y2="439" class="qt"/>
<line x1="838.1" y1="437" x2="838.1" y2="439" class="qt"/>
<line x1="849.6" y1="437" x2="849.6" y2="439" class="qt"/>
<line x1="861.0" y1="437" x2="861.0" y2="439" class="qt"/>
<line x1="872.5" y1="437" x2="872.5" y2="439" class="qt"/>
<line x1="884.0" y1="437" x2="884.0" y2="439" class="qt"/>
<line x1="895.5" y1="437" x2="895.5" y2="439" class="qt"/>
<line x1="906.9" y1="437" x2="906.9" y2="439" class="qt"/>
<line x1="918.4" y1="437" x2="918.4" y2="439" class="qt"/>
<line x1="929.9" y1="437" x2="929.9" y2="439" class="qt"/>
<line x1="941.3" y1="437" x2="941.3" y2="439" class="qt"/>
<path d="M954 83.7 L958.5 86 L954 88.3Z" fill="#e8e8e8"/>
<text transform="translate(959.30 89.00) scale(0.8292 1)" font-family="Liberation Sans" font-weight="normal" font-size="7.59" fill="#d8d8d8" >100</text>
<path d="M954 98.2 L958.5 100.5 L954 102.8Z" fill="#e8e8e8"/>
<text transform="translate(959.30 103.50) scale(0.8292 1)" font-family="Liberation Sans" font-weight="normal" font-size="7.59" fill="#d8d8d8" >90</text>
<path d="M954 112.7 L958.5 115 L954 117.3Z" fill="#e8e8e8"/>
<text transform="translate(959.30 118.00) scale(0.8292 1)" font-family="Liberation Sans" font-weight="normal" font-size="7.59" fill="#d8d8d8" >80</text>
<path d="M954 130.7 L958.5 133 L954 135.3Z" fill="#e8e8e8"/>
<text transform="translate(959.30 136.00) scale(0.8292 1)" font-family="Liberation Sans" font-weight="normal" font-size="7.59" fill="#d8d8d8" >70</text>
<path d="M954 150.7 L958.5 153 L954 155.3Z" fill="#e8e8e8"/>
<text transform="translate(959.30 156.00) scale(0.8292 1)" font-family="Liberation Sans" font-weight="normal" font-size="7.59" fill="#d8d8d8" >60</text>
<path d="M954 174.2 L958.5 176.5 L954 178.8Z" fill="#e8e8e8"/>
<text transform="translate(959.30 179.50) scale(0.8292 1)" font-family="Liberation Sans" font-weight="normal" font-size="7.59" fill="#d8d8d8" >50</text>
<path d="M954 203.2 L958.5 205.5 L954 207.8Z" fill="#e8e8e8"/>
<text transform="translate(959.30 208.50) scale(0.8292 1)" font-family="Liberation Sans" font-weight="normal" font-size="7.59" fill="#d8d8d8" >40</text>
<path d="M954 241.45 L958.5 243.75 L954 246.05Z" fill="#e8e8e8"/>
<text transform="translate(959.30 246.75) scale(0.8292 1)" font-family="Liberation Sans" font-weight="normal" font-size="7.59" fill="#d8d8d8" >30</text>
<path d="M954 384.7 L958.5 387 L954 389.3Z" fill="#e8e8e8"/>
<text transform="translate(959.30 390.00) scale(0.8292 1)" font-family="Liberation Sans" font-weight="normal" font-size="7.59" fill="#d8d8d8" >10</text>
<path d="M954 398.2 L958.5 400.5 L954 402.8Z" fill="#e8e8e8"/>
<text transform="translate(959.30 403.50) scale(0.8123 1)" font-family="Liberation Sans" font-weight="normal" font-size="7.59" fill="#d8d8d8" >9.00</text>
<path d="M954 413.7 L958.5 416 L954 418.3Z" fill="#e8e8e8"/>
<text transform="translate(959.30 419.00) scale(0.8123 1)" font-family="Liberation Sans" font-weight="normal" font-size="7.59" fill="#d8d8d8" >8.00</text>
<path d="M954 430.2 L958.5 432.5 L954 434.8Z" fill="#e8e8e8"/>
<text transform="translate(959.30 435.50) scale(0.8123 1)" font-family="Liberation Sans" font-weight="normal" font-size="7.59" fill="#d8d8d8" >7.00</text>
<text transform="translate(18.93 445.00) scale(0.7702 1)" font-family="Liberation Sans" font-weight="normal" font-size="8.18" fill="#d4d4d4" stroke="#d4d4d4" stroke-width="0.2">Q3</text>
<text transform="translate(42.07 445.00) scale(0.7336 1)" font-family="Liberation Sans" font-weight="normal" font-size="8.18" fill="#d4d4d4" stroke="#d4d4d4" stroke-width="0.2">Q1</text>
<text transform="translate(64.81 445.00) scale(0.7702 1)" font-family="Liberation Sans" font-weight="normal" font-size="8.18" fill="#d4d4d4" stroke="#d4d4d4" stroke-width="0.2">Q3</text>
<text transform="translate(51.14 453.00) scale(0.8289 1)" font-family="Liberation Sans" font-weight="normal" font-size="7.59" fill="#d4d4d4" stroke="#d4d4d4" stroke-width="0.2">2003</text>
<text transform="translate(87.95 445.00) scale(0.7336 1)" font-family="Liberation Sans" font-weight="normal" font-size="8.18" fill="#d4d4d4" stroke="#d4d4d4" stroke-width="0.2">Q1</text>
<text transform="translate(110.69 445.00) scale(0.7702 1)" font-family="Liberation Sans" font-weight="normal" font-size="8.18" fill="#d4d4d4" stroke="#d4d4d4" stroke-width="0.2">Q3</text>
<text transform="translate(97.02 453.00) scale(0.8289 1)" font-family="Liberation Sans" font-weight="normal" font-size="7.59" fill="#d4d4d4" stroke="#d4d4d4" stroke-width="0.2">2004</text>
<text transform="translate(133.83 445.00) scale(0.7336 1)" font-family="Liberation Sans" font-weight="normal" font-size="8.18" fill="#d4d4d4" stroke="#d4d4d4" stroke-width="0.2">Q1</text>
<text transform="translate(156.57 445.00) scale(0.7702 1)" font-family="Liberation Sans" font-weight="normal" font-size="8.18" fill="#d4d4d4" stroke="#d4d4d4" stroke-width="0.2">Q3</text>
<text transform="translate(142.90 453.00) scale(0.8289 1)" font-family="Liberation Sans" font-weight="normal" font-size="7.59" fill="#d4d4d4" stroke="#d4d4d4" stroke-width="0.2">2005</text>
<text transform="translate(179.71 445.00) scale(0.7336 1)" font-family="Liberation Sans" font-weight="normal" font-size="8.18" fill="#d4d4d4" stroke="#d4d4d4" stroke-width="0.2">Q1</text>
<text transform="translate(202.45 445.00) scale(0.7702 1)" font-family="Liberation Sans" font-weight="normal" font-size="8.18" fill="#d4d4d4" stroke="#d4d4d4" stroke-width="0.2">Q3</text>
<text transform="translate(188.78 453.00) scale(0.8289 1)" font-family="Liberation Sans" font-weight="normal" font-size="7.59" fill="#d4d4d4" stroke="#d4d4d4" stroke-width="0.2">2006</text>
<text transform="translate(225.59 445.00) scale(0.7336 1)" font-family="Liberation Sans" font-weight="normal" font-size="8.18" fill="#d4d4d4" stroke="#d4d4d4" stroke-width="0.2">Q1</text>
<text transform="translate(248.33 445.00) scale(0.7702 1)" font-family="Liberation Sans" font-weight="normal" font-size="8.18" fill="#d4d4d4" stroke="#d4d4d4" stroke-width="0.2">Q3</text>
<text transform="translate(234.66 453.00) scale(0.8289 1)" font-family="Liberation Sans" font-weight="normal" font-size="7.59" fill="#d4d4d4" stroke="#d4d4d4" stroke-width="0.2">2007</text>
<text transform="translate(271.47 445.00) scale(0.7336 1)" font-family="Liberation Sans" font-weight="normal" font-size="8.18" fill="#d4d4d4" stroke="#d4d4d4" stroke-width="0.2">Q1</text>
<text transform="translate(294.21 445.00) scale(0.7702 1)" font-family="Liberation Sans" font-weight="normal" font-size="8.18" fill="#d4d4d4" stroke="#d4d4d4" stroke-width="0.2">Q3</text>
<text transform="translate(280.54 453.00) scale(0.8289 1)" font-family="Liberation Sans" font-weight="normal" font-size="7.59" fill="#d4d4d4" stroke="#d4d4d4" stroke-width="0.2">2008</text>
<text transform="translate(317.35 445.00) scale(0.7336 1)" font-family="Liberation Sans" font-weight="normal" font-size="8.18" fill="#d4d4d4" stroke="#d4d4d4" stroke-width="0.2">Q1</text>
<text transform="translate(340.09 445.00) scale(0.7702 1)" font-family="Liberation Sans" font-weight="normal" font-size="8.18" fill="#d4d4d4" stroke="#d4d4d4" stroke-width="0.2">Q3</text>
<text transform="translate(326.42 453.00) scale(0.8289 1)" font-family="Liberation Sans" font-weight="normal" font-size="7.59" fill="#d4d4d4" stroke="#d4d4d4" stroke-width="0.2">2009</text>
<text transform="translate(363.23 445.00) scale(0.7336 1)" font-family="Liberation Sans" font-weight="normal" font-size="8.18" fill="#d4d4d4" stroke="#d4d4d4" stroke-width="0.2">Q1</text>
<text transform="translate(385.97 445.00) scale(0.7702 1)" font-family="Liberation Sans" font-weight="normal" font-size="8.18" fill="#d4d4d4" stroke="#d4d4d4" stroke-width="0.2">Q3</text>
<text transform="translate(372.30 453.00) scale(0.8289 1)" font-family="Liberation Sans" font-weight="normal" font-size="7.59" fill="#d4d4d4" stroke="#d4d4d4" stroke-width="0.2">2010</text>
<text transform="translate(409.11 445.00) scale(0.7336 1)" font-family="Liberation Sans" font-weight="normal" font-size="8.18" fill="#d4d4d4" stroke="#d4d4d4" stroke-width="0.2">Q1</text>
<text transform="translate(431.85 445.00) scale(0.7702 1)" font-family="Liberation Sans" font-weight="normal" font-size="8.18" fill="#d4d4d4" stroke="#d4d4d4" stroke-width="0.2">Q3</text>
<text transform="translate(418.18 453.00) scale(0.8578 1)" font-family="Liberation Sans" font-weight="normal" font-size="7.59" fill="#d4d4d4" stroke="#d4d4d4" stroke-width="0.2">2011</text>
<text transform="translate(454.99 445.00) scale(0.7336 1)" font-family="Liberation Sans" font-weight="normal" font-size="8.18" fill="#d4d4d4" stroke="#d4d4d4" stroke-width="0.2">Q1</text>
<text transform="translate(477.73 445.00) scale(0.7702 1)" font-family="Liberation Sans" font-weight="normal" font-size="8.18" fill="#d4d4d4" stroke="#d4d4d4" stroke-width="0.2">Q3</text>
<text transform="translate(464.06 453.00) scale(0.8289 1)" font-family="Liberation Sans" font-weight="normal" font-size="7.59" fill="#d4d4d4" stroke="#d4d4d4" stroke-width="0.2">2012</text>
<text transform="translate(500.87 445.00) scale(0.7336 1)" font-family="Liberation Sans" font-weight="normal" font-size="8.18" fill="#d4d4d4" stroke="#d4d4d4" stroke-width="0.2">Q1</text>
<text transform="translate(523.61 445.00) scale(0.7702 1)" font-family="Liberation Sans" font-weight="normal" font-size="8.18" fill="#d4d4d4" stroke="#d4d4d4" stroke-width="0.2">Q3</text>
<text transform="translate(509.94 453.00) scale(0.8289 1)" font-family="Liberation Sans" font-weight="normal" font-size="7.59" fill="#d4d4d4" stroke="#d4d4d4" stroke-width="0.2">2013</text>
<text transform="translate(546.75 445.00) scale(0.7336 1)" font-family="Liberation Sans" font-weight="normal" font-size="8.18" fill="#d4d4d4" stroke="#d4d4d4" stroke-width="0.2">Q1</text>
<text transform="translate(569.49 445.00) scale(0.7702 1)" font-family="Liberation Sans" font-weight="normal" font-size="8.18" fill="#d4d4d4" stroke="#d4d4d4" stroke-width="0.2">Q3</text>
<text transform="translate(555.82 453.00) scale(0.8289 1)" font-family="Liberation Sans" font-weight="normal" font-size="7.59" fill="#d4d4d4" stroke="#d4d4d4" stroke-width="0.2">2014</text>
<text transform="translate(592.63 445.00) scale(0.7336 1)" font-family="Liberation Sans" font-weight="normal" font-size="8.18" fill="#d4d4d4" stroke="#d4d4d4" stroke-width="0.2">Q1</text>
<text transform="translate(615.37 445.00) scale(0.7702 1)" font-family="Liberation Sans" font-weight="normal" font-size="8.18" fill="#d4d4d4" stroke="#d4d4d4" stroke-width="0.2">Q3</text>
<text transform="translate(601.70 453.00) scale(0.8289 1)" font-family="Liberation Sans" font-weight="normal" font-size="7.59" fill="#d4d4d4" stroke="#d4d4d4" stroke-width="0.2">2015</text>
<text transform="translate(638.51 445.00) scale(0.7336 1)" font-family="Liberation Sans" font-weight="normal" font-size="8.18" fill="#d4d4d4" stroke="#d4d4d4" stroke-width="0.2">Q1</text>
<text transform="translate(661.25 445.00) scale(0.7702 1)" font-family="Liberation Sans" font-weight="normal" font-size="8.18" fill="#d4d4d4" stroke="#d4d4d4" stroke-width="0.2">Q3</text>
<text transform="translate(647.58 453.00) scale(0.8289 1)" font-family="Liberation Sans" font-weight="normal" font-size="7.59" fill="#d4d4d4" stroke="#d4d4d4" stroke-width="0.2">2016</text>
<text transform="translate(684.39 445.00) scale(0.7336 1)" font-family="Liberation Sans" font-weight="normal" font-size="8.18" fill="#d4d4d4" stroke="#d4d4d4" stroke-width="0.2">Q1</text>
<text transform="translate(707.13 445.00) scale(0.7702 1)" font-family="Liberation Sans" font-weight="normal" font-size="8.18" fill="#d4d4d4" stroke="#d4d4d4" stroke-width="0.2">Q3</text>
<text transform="translate(693.46 453.00) scale(0.8289 1)" font-family="Liberation Sans" font-weight="normal" font-size="7.59" fill="#d4d4d4" stroke="#d4d4d4" stroke-width="0.2">2017</text>
<text transform="translate(730.27 445.00) scale(0.7336 1)" font-family="Liberation Sans" font-weight="normal" font-size="8.18" fill="#d4d4d4" stroke="#d4d4d4" stroke-width="0.2">Q1</text>
<text transform="translate(753.01 445.00) scale(0.7702 1)" font-family="Liberation Sans" font-weight="normal" font-size="8.18" fill="#d4d4d4" stroke="#d4d4d4" stroke-width="0.2">Q3</text>
<text transform="translate(739.34 453.00) scale(0.8289 1)" font-family="Liberation Sans" font-weight="normal" font-size="7.59" fill="#d4d4d4" stroke="#d4d4d4" stroke-width="0.2">2018</text>
<text transform="translate(776.15 445.00) scale(0.7336 1)" font-family="Liberation Sans" font-weight="normal" font-size="8.18" fill="#d4d4d4" stroke="#d4d4d4" stroke-width="0.2">Q1</text>
<text transform="translate(798.89 445.00) scale(0.7702 1)" font-family="Liberation Sans" font-weight="normal" font-size="8.18" fill="#d4d4d4" stroke="#d4d4d4" stroke-width="0.2">Q3</text>
<text transform="translate(785.22 453.00) scale(0.8289 1)" font-family="Liberation Sans" font-weight="normal" font-size="7.59" fill="#d4d4d4" stroke="#d4d4d4" stroke-width="0.2">2019</text>
<text transform="translate(822.03 445.00) scale(0.7336 1)" font-family="Liberation Sans" font-weight="normal" font-size="8.18" fill="#d4d4d4" stroke="#d4d4d4" stroke-width="0.2">Q1</text>
<text transform="translate(844.77 445.00) scale(0.7702 1)" font-family="Liberation Sans" font-weight="normal" font-size="8.18" fill="#d4d4d4" stroke="#d4d4d4" stroke-width="0.2">Q3</text>
<text transform="translate(831.10 453.00) scale(0.8289 1)" font-family="Liberation Sans" font-weight="normal" font-size="7.59" fill="#d4d4d4" stroke="#d4d4d4" stroke-width="0.2">2020</text>
<text transform="translate(867.91 445.00) scale(0.7336 1)" font-family="Liberation Sans" font-weight="normal" font-size="8.18" fill="#d4d4d4" stroke="#d4d4d4" stroke-width="0.2">Q1</text>
<text transform="translate(890.65 445.00) scale(0.7702 1)" font-family="Liberation Sans" font-weight="normal" font-size="8.18" fill="#d4d4d4" stroke="#d4d4d4" stroke-width="0.2">Q3</text>
<text transform="translate(876.98 453.00) scale(0.8289 1)" font-family="Liberation Sans" font-weight="normal" font-size="7.59" fill="#d4d4d4" stroke="#d4d4d4" stroke-width="0.2">2021</text>
<text transform="translate(913.79 445.00) scale(0.7336 1)" font-family="Liberation Sans" font-weight="normal" font-size="8.18" fill="#d4d4d4" stroke="#d4d4d4" stroke-width="0.2">Q1</text>
<text transform="translate(936.53 445.00) scale(0.7702 1)" font-family="Liberation Sans" font-weight="normal" font-size="8.18" fill="#d4d4d4" stroke="#d4d4d4" stroke-width="0.2">Q3</text>
<text transform="translate(922.86 453.00) scale(0.8289 1)" font-family="Liberation Sans" font-weight="normal" font-size="7.59" fill="#d4d4d4" stroke="#d4d4d4" stroke-width="0.2">2022</text>
<rect x="2" y="72" width="132.5" height="52" fill="#0f0f0f"/>
<rect x="12.3" y="80.5" width="6.7" height="6.2" fill="#f2f2f2"/>
<rect x="7.7" y="81.5" width="2.6" height="2.6" fill="none" stroke="#666" stroke-width="0.7"/>
<path d="M9 84 V115.5 M9 94 H11 M9 104 H11 M9 115 H11" stroke="#555" stroke-width="0.8" fill="none"/>
<path d="M14 91 H17 M15.5 91 V97 M14 104 H17 M16 102.7 L17.3 104 L16 105.3 M15.5 111 V117 M14 117 H17" stroke="#777" stroke-width="0.8" fill="none"/>
<text transform="translate(21.00 86.80) scale(1.0447 1)" font-family="Liberation Sans" font-weight="normal" font-size="9.20" fill="#dcdcdc" stroke="#dcdcdc" stroke-width="0.25">Letzter Kurs</text>
<text transform="translate(21.00 97.20) scale(1.0471 1)" font-family="Liberation Sans" font-weight="normal" font-size="9.49" fill="#dcdcdc" stroke="#dcdcdc" stroke-width="0.25">Hoch am 12/31/08</text>
<text transform="translate(21.00 107.40) scale(0.9954 1)" font-family="Liberation Sans" font-weight="normal" font-size="9.49" fill="#dcdcdc" stroke="#dcdcdc" stroke-width="0.25">Durchschnitt</text>
<text transform="translate(21.00 117.40) scale(1.0769 1)" font-family="Liberation Sans" font-weight="normal" font-size="9.49" fill="#dcdcdc" stroke="#dcdcdc" stroke-width="0.25">Tief am 12/29/17</text>
<text transform="translate(106.40 86.80) scale(0.9734 1)" font-family="Liberation Sans" font-weight="normal" font-size="9.20" fill="#dcdcdc" stroke="#dcdcdc" stroke-width="0.25">19.74</text>
<text transform="translate(105.70 97.20) scale(0.9730 1)" font-family="Liberation Sans" font-weight="normal" font-size="9.49" fill="#dcdcdc" stroke="#dcdcdc" stroke-width="0.25">89.53</text>
<text transform="translate(106.40 107.40) scale(0.9435 1)" font-family="Liberation Sans" font-weight="normal" font-size="9.49" fill="#dcdcdc" stroke="#dcdcdc" stroke-width="0.25">19.80</text>
<text transform="translate(110.60 117.40) scale(0.9856 1)" font-family="Liberation Sans" font-weight="normal" font-size="9.49" fill="#dcdcdc" stroke="#dcdcdc" stroke-width="0.25">8.56</text>
<rect x="421" y="72" width="129" height="7.8" fill="#121212"/>
<rect x="462" y="72" width="36" height="7.8" fill="#10263a"/>
<text transform="translate(433.00 78.00) scale(0.8875 1)" font-family="Liberation Sans" font-weight="normal" font-size="5.55" fill="#aaa" >Fadenkreuz</text>
<path d="M425 76 H428 M426.5 74.5 V77.5" stroke="#999" stroke-width="0.6"/>
<path d="M466 78 L469 74.5 M466 78.2 H469" stroke="#aaa" stroke-width="0.6"/>
<text transform="translate(473.00 78.00) scale(0.9096 1)" font-family="Liberation Sans" font-weight="normal" font-size="5.55" fill="#bbb" >Anmerken</text>
<path d="M503 75 H505 M503 77 H505" stroke="#999" stroke-width="0.7"/>
<text transform="translate(510.00 78.00) scale(0.8649 1)" font-family="Liberation Sans" font-weight="normal" font-size="5.55" fill="#aaa" >News</text>
<circle cx="530" cy="75.6" r="1.2" fill="none" stroke="#999" stroke-width="0.6"/>
<text transform="translate(536.00 78.00) scale(0.8463 1)" font-family="Liberation Sans" font-weight="normal" font-size="5.55" fill="#aaa" >Zoom</text>
<text transform="translate(962 241.8) rotate(90)" font-family="Liberation Sans" font-size="14" fill="#767676">Log</text>
<path d="M953.8 298.4 L957.5 294 H976 V302.8 H957.5 Z" fill="#f2f2f2"/>
<text transform="translate(958.50 301.20) scale(0.8687 1)" font-family="Liberation Sans" font-weight="normal" font-size="7.59" fill="#333" >19.74</text>
<rect x="953" y="407.5" width="22" height="6.8" fill="#c4f0f2"/>
<text transform="translate(953.80 413.80) scale(0.8768 1)" font-family="Liberation Sans" font-weight="normal" font-size="8.03" fill="#3f8a90" >8.29</text>
<rect x="0" y="447" width="31" height="7.6" fill="#b8e2ea"/>
<text transform="translate(0.50 453.40) scale(1.0151 1)" font-family="Liberation Sans" font-weight="normal" font-size="7.59" fill="#4a7888" >06/28/02</text>
<path d="M12 411 L12 422 L14.6 419.8 L16.5 423.8 L17.9 423.2 L16.1 419.3 L19.6 419.3 Z" fill="#fff" stroke="#222" stroke-width="0.5"/>
<rect x="990.5" y="101.8" width="9.5" height="116.5" fill="#282828"/>
<rect x="991" y="101.8" width="0.8" height="116.5" fill="#3a3a3a"/>
<rect x="990.5" y="220" width="9.5" height="57" fill="#080808"/>
<rect x="990.5" y="279" width="9.5" height="58.5" fill="#080808"/>
<rect x="990.5" y="339" width="9.5" height="58" fill="#080808"/>
<rect x="991.5" y="219" width="8.5" height="0.9" fill="#8a8a8a"/>
<rect x="991.5" y="278" width="8.5" height="0.9" fill="#8a8a8a"/>
<rect x="991.5" y="338" width="8.5" height="0.9" fill="#8a8a8a"/>
<rect x="991.5" y="397.8" width="8.5" height="0.9" fill="#8a8a8a"/>
<g transform="translate(976 72)"><rect width="14" height="13.5" fill="#2a5f9a"/><path d="M4 3 L11 6.5 L8 7.5 L10.5 10.5 L9.3 11.3 L6.8 8.6 L5 11 Z" fill="#fff"/></g>
<g transform="translate(976 86.9)"><rect width="14" height="13.5" fill="#2e2e2e"/><line x1="3.5" y1="10" x2="10" y2="3.5" stroke="#ddd" stroke-width="1"/><line x1="3" y1="10.5" x2="9" y2="10.5" stroke="#ddd" stroke-width="0.8"/><path d="M10 11 L13 11 L11.5 12.6Z" fill="#ddd"/></g>
<g transform="translate(976 101.8)"><rect width="14" height="13.5" fill="#2e2e2e"/><line x1="3" y1="11" x2="11" y2="3" stroke="#fff" stroke-width="1.2"/><circle cx="4.3" cy="9.7" r="1.6" fill="#fff"/><circle cx="9.7" cy="4.3" r="1.6" fill="#fff"/></g>
<g transform="translate(976 116.8)"><rect width="14" height="13.5" fill="#2e2e2e"/><line x1="3" y1="11" x2="11" y2="3" stroke="#fff" stroke-width="1.2"/><circle cx="5.5" cy="8.5" r="1.8" fill="#fff"/><circle cx="8.5" cy="5.5" r="1.8" fill="#fff"/></g>
<g transform="translate(976 131.8)"><rect width="14" height="13.5" fill="#2e2e2e"/><path d="M3 3 H7 M5 3 V9.5 M3.5 8 L5 10 L6.5 8 M3 11 H7" stroke="#fff" stroke-width="1" fill="none"/><text x="7.3" y="10.8" font-size="5.5" fill="#fff" font-family="Liberation Sans" font-weight="bold">%</text></g>
<g transform="translate(976 146.8)"><rect width="14" height="13.5" fill="#2e2e2e"/><rect x="2.5" y="6" width="9" height="1.6" fill="#fff"/></g>
<g transform="translate(976 161.2)"><rect width="14" height="13.5" fill="#2e2e2e"/><text x="2" y="11.5" font-size="11" fill="#fff" font-family="Liberation Sans" font-weight="bold">P</text><rect x="10" y="3.5" width="1.3" height="1.3" fill="#fff"/><rect x="10" y="6.5" width="1.3" height="1.3" fill="#fff"/><rect x="10" y="9.5" width="1.3" height="1.3" fill="#fff"/></g>
<g transform="translate(976 176)"><rect width="14" height="13.5" fill="#2e2e2e"/><text x="2" y="11.5" font-size="11" fill="#fff" font-family="Liberation Sans" font-weight="bold">R</text><rect x="10" y="3.5" width="1.3" height="1.3" fill="#fff"/><rect x="10" y="6.5" width="1.3" height="1.3" fill="#fff"/><rect x="10" y="9.5" width="1.3" height="1.3" fill="#fff"/></g>
<g transform="translate(976 190.6)"><rect width="14" height="13.5" fill="#2e2e2e"/><line x1="3.5" y1="10.5" x2="10.5" y2="3.5" stroke="#fff" stroke-width="1.2"/><circle cx="3.8" cy="10.2" r="1.3" fill="#fff"/><circle cx="10.2" cy="3.8" r="1.3" fill="#fff"/></g>
<g transform="translate(976 205.2)"><rect width="14" height="13.5" fill="#2e2e2e"/><path d="M3 3 H7 M5 3 V9.5 M3.5 8 L5 10 L6.5 8 M3 11 H7" stroke="#fff" stroke-width="1" fill="none"/><text x="7.3" y="11" font-size="7" fill="#fff" font-family="Liberation Sans" font-weight="bold">$</text></g>
<g transform="translate(976 221)"><rect width="14" height="13.5" fill="#2e2e2e"/><line x1="3.5" y1="10.5" x2="10.5" y2="3.5" stroke="#ddd" stroke-width="1.4"/><path d="M10 11 L13 11 L11.5 12.6Z" fill="#ddd"/></g>
<g transform="translate(976 235.6)"><rect width="14" height="13.5" fill="#2e2e2e"/><path d="M7 2.5 V11.5 M2.5 7 H11.5" stroke="#fff" stroke-width="1"/><path d="M7 1.5 L5.5 3.5 H8.5Z M7 12.5 L5.5 10.5 H8.5Z M1.5 7 L3.5 5.5 V8.5Z M12.5 7 L10.5 5.5 V8.5Z" fill="#fff"/></g>
<g transform="translate(976 250)"><rect width="14" height="13.5" fill="#2e2e2e"/><path d="M3 2.5 L3 11.5 L5.3 9.5 L7 12.5 L8 12 L6.5 9 L9.5 9 Z" fill="#eee"/><path d="M10 2 V6 M8 4 H12" stroke="#fff" stroke-width="1"/></g>
<g transform="translate(976 263.6)"><rect width="14" height="13.5" fill="#2e2e2e"/><rect x="4" y="4.5" width="6" height="7" fill="#ccc"/><rect x="3.3" y="3" width="7.4" height="1.2" fill="#ccc"/></g>
<g transform="translate(976 280)"><rect width="14" height="13.5" fill="#2e2e2e"/><text x="2.5" y="11.5" font-size="12" fill="#fff" font-family="Liberation Serif" font-style="italic">A</text></g>
<g transform="translate(976 294.6)"><rect width="14" height="13.5" fill="#2e2e2e"/><rect x="3" y="3" width="8" height="8" fill="#fff"/><path d="M10.5 11.5 L13 11.5 L11.7 12.8Z" fill="#ddd"/></g>
<g transform="translate(976 309.4)"><rect width="14" height="13.5" fill="#2e2e2e"/><rect x="3" y="3" width="8.5" height="1.4" fill="#fff"/><rect x="3" y="5.8" width="8.5" height="3" fill="#fff"/><rect x="3" y="10" width="8.5" height="1" fill="#fff"/><path d="M10.5 11.5 L13 11.5 L11.7 12.8Z" fill="#ddd"/></g>
<g transform="translate(976 324)"><rect width="14" height="13.5" fill="#2e2e2e"/><rect x="3" y="3.5" width="8.5" height="1" fill="#fff"/><rect x="3" y="6.3" width="8.5" height="1.2" fill="#fff"/><path d="M3 9.5 H5 M6 9.5 H8 M9 9.5 H11.5" stroke="#fff" stroke-width="1"/><path d="M10.5 11.5 L13 11.5 L11.7 12.8Z" fill="#ddd"/></g>
<g transform="translate(976 339.2)"><rect width="14" height="13.5" fill="#2e2e2e"/><rect x="2" y="5.5" width="10" height="3.5" rx="1.7" transform="rotate(-45 7 7.2)" fill="none" stroke="#ccc" stroke-width="0.9"/></g>
<g transform="translate(976 354)"><rect width="14" height="13.5" fill="#2e2e2e"/><path d="M3 5 H11 M7 2.5 V7.5 M3 9.5 H11" stroke="#fff" stroke-width="1.2"/></g>
<g transform="translate(976 368.8)"><rect width="14" height="13.5" fill="#2a5f9a"/><path d="M10.5 3.5 H7 A3.6 3.6 0 0 0 7 10.8 H10.5" fill="none" stroke="#fff" stroke-width="2"/><path d="M10.5 3.5 H7 A3.6 3.6 0 0 0 7 10.8 H10.5" fill="none" stroke="#2a5f9a" stroke-width="0.8"/></g>
<g transform="translate(976 383.4)"><rect width="14" height="13.5" fill="#2a5f9a"/><circle cx="7" cy="4.5" r="2" fill="#2f7fff"/><circle cx="4.8" cy="8.5" r="2.2" fill="#22cc33"/><circle cx="9.2" cy="8.5" r="2.2" fill="#e02525"/></g>
<g transform="translate(976 399.2)"><rect width="14" height="13.5" fill="#2e2e2e"/><circle cx="7" cy="7" r="3.2" fill="none" stroke="#fff" stroke-width="2"/><circle cx="7" cy="7" r="4.3" fill="none" stroke="#fff" stroke-width="1.4" stroke-dasharray="1.3 1.1"/><path d="M10.5 11.5 L13 11.5 L11.7 12.8Z" fill="#ddd"/></g>
<path d="M992.5 74.5 L999.5 74.5 L996 78Z" fill="#ddd"/>
<rect x="987" y="60" width="10.5" height="10.4" fill="#171717"/><rect x="990" y="62.2" width="4.8" height="1" fill="#aaa"/><rect x="990" y="63.8" width="4.8" height="1.1" fill="#ccc"/><path d="M990 65.6 L994.8 65.6 L992.4 68Z" fill="#e0e0e0"/>
<text transform="translate(992.5 148.5) rotate(90)" font-family="Liberation Sans" font-size="8" fill="#9a9a9a">Favoriten</text>
<text transform="translate(992.5 237) rotate(90)" font-family="Liberation Sans" font-size="8" fill="#9a9a9a">Ändern</text>
<text transform="translate(992.5 293) rotate(90)" font-family="Liberation Sans" font-size="8" fill="#9a9a9a">Stil</text>
<text transform="translate(992.5 350) rotate(90)" font-family="Liberation Sans" font-size="8" fill="#9a9a9a">Modus</text>
<path d="M992.5 147.5 L996.5 143.5" stroke="#aaa" stroke-width="0.9"/>
<text transform="translate(14.50 475.40) scale(0.9936 1)" font-family="Liberation Sans" font-weight="normal" font-size="9.05" fill="#e0963c" >Vorgeschlagene Funktionen</text>
<text transform="translate(145.60 475.40) scale(1.0143 1)" font-family="Liberation Sans" font-weight="bold" font-size="9.05" fill="#f0f0f0" >RRG</text>
<text transform="translate(172.60 475.40) scale(1.0388 1)" font-family="Liberation Sans" font-weight="normal" font-size="9.05" fill="#b4b4b4" >Visualisierung relativer Performance-Trends</text>
<text transform="translate(578.00 475.40) scale(1.1506 1)" font-family="Liberation Sans" font-weight="bold" font-size="8.76" fill="#f0f0f0" >CIX</text>
<text transform="translate(600.80 475.40) scale(1.0706 1)" font-family="Liberation Sans" font-weight="normal" font-size="8.76" fill="#b4b4b4" >Erstellen Sie einen nutzerdefinierten Index</text>
</svg>
</body></html>
